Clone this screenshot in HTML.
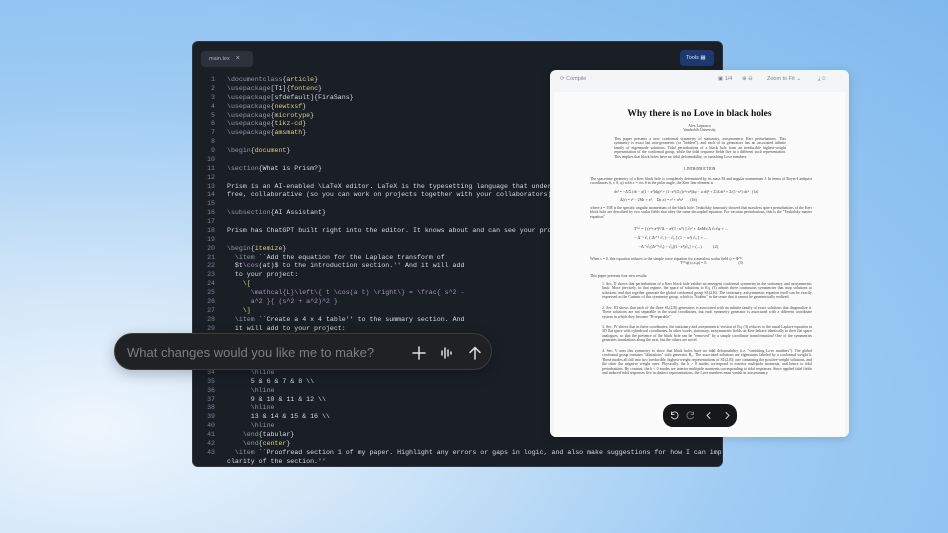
<!DOCTYPE html>
<html><head><meta charset="utf-8"><style>
*{margin:0;padding:0;box-sizing:border-box}
body{width:948px;height:533px;overflow:hidden;position:relative;font-family:"Liberation Sans",sans-serif;
background:radial-gradient(ellipse at 10% 80%,#eef6fd 0%,#cfe5f8 25%,#9dcbf3 55%,#7fb9ee 100%)}
.ed{position:absolute;left:192px;top:41px;width:531px;height:426px;background:#1a1f26;border:1px solid #2e3540;border-radius:6px;overflow:hidden}
.tab{position:absolute;left:8px;top:9px;width:52px;height:16px;background:#2b323c;border-radius:4px;color:#aab2bd;font-size:5.5px;line-height:16px;padding-left:8px}
.tab i{font-style:normal;margin-left:6px;font-size:7px}
.tools{position:absolute;right:8px;top:8px;width:34px;height:16px;background:#1d3a70;border-radius:4px;color:#cfe0ff;font-size:5.5px;line-height:16px;padding-left:6px}
.code{position:absolute;left:0;top:34px;font-family:"Liberation Mono",monospace;font-size:6.6px;line-height:8.88px;color:#d6dbe2}
.code div{height:8.88px;white-space:pre}
.n{display:inline-block;width:22px;text-align:right;color:#7c8594;margin-right:12px}
.c{color:#8f99a8}.a{color:#d9cf95}.m{color:#a58fc4}
.pdf{position:absolute;left:550px;top:70px;width:299px;height:367px;background:#f4f5f6;border-radius:6px;box-shadow:0 2px 10px rgba(0,0,0,.15);overflow:hidden}
.tb{height:19px;font-size:5.5px;color:#7d838b;line-height:19px;padding-left:10px;position:relative}
.page{position:absolute;left:4px;top:22px;right:4px;bottom:0;background:#fbfbfb;font-family:"Liberation Serif",serif;color:#333}
.t{position:absolute;left:0;right:0;text-align:center;font-weight:bold;font-size:9.5px;top:17px;color:#111}
.p{position:absolute;font-size:3.9px;line-height:4.4px;text-align:justify;color:#444}
.chat{position:absolute;left:114px;top:333px;width:378px;height:37px;background:#1f2123;border-radius:19px;border:1px solid #3a3c3f;box-shadow:0 4px 14px rgba(0,0,0,.25)}
.chat span{position:absolute;left:12px;top:11px;font-size:13px;color:#7b7e83}
.ctl{position:absolute;left:663px;top:404px;width:74px;height:23px;background:#16181a;border-radius:10px}
</style></head><body>
<div class="ed">
<div class="tab">main.tex<i>×</i></div>
<div class="tools">Tools ▦</div>
<div class="code"><div><span class="n">1</span><span class="c">\documentclass</span>{<span class="a">article</span>}</div><div><span class="n">2</span><span class="c">\usepackage</span>[T1]{<span class="a">fontenc</span>}</div><div><span class="n">3</span><span class="c">\usepackage</span>[sfdefault]{FiraSans}</div><div><span class="n">4</span><span class="c">\usepackage</span>{<span class="a">newtxsf</span>}</div><div><span class="n">5</span><span class="c">\usepackage</span>{<span class="a">microtype</span>}</div><div><span class="n">6</span><span class="c">\usepackage</span>{<span class="a">tikz-cd</span>}</div><div><span class="n">7</span><span class="c">\usepackage</span>{<span class="a">amsmath</span>}</div><div><span class="n">8</span></div><div><span class="n">9</span><span class="c">\begin</span>{<span class="a">document</span>}</div><div><span class="n">10</span></div><div><span class="n">11</span><span class="c">\section</span>{What is Prism?}</div><div><span class="n">12</span></div><div><span class="n">13</span>Prism is an AI-enabled \LaTeX editor. LaTeX is the typesetting language that underlies most scientific papers.</div><div><span class="n">14</span>free, collaborative (so you can work on projects together with your collaborators), and powered by AI.</div><div><span class="n">15</span></div><div><span class="n">16</span><span class="c">\subsection</span>{AI Assistant}</div><div><span class="n">17</span></div><div><span class="n">18</span>Prism has ChatGPT built right into the editor. It knows about and can see your project, so it can help.</div><div><span class="n">19</span></div><div><span class="n">20</span><span class="c">\begin</span>{<span class="a">itemize</span>}</div><div><span class="n">21</span>  <span class="c">\item</span> ``Add the equation for the Laplace transform of</div><div><span class="n">22</span>  $t<span class="m">\cos</span>(at)$ to the introduction section.'' And it will add</div><div><span class="n">23</span>  to your project:</div><div><span class="n">24</span>    <span class="a">\[</span></div><div><span class="n">25</span>      <span class="m">\mathcal{L}\left\{ t \cos(a t) \right\} = \frac{ s^2 -</span></div><div><span class="n">26</span>      <span class="m">a^2 }{ (s^2 + a^2)^2 }</span></div><div><span class="n">27</span>    <span class="a">\]</span></div><div><span class="n">28</span>  <span class="c">\item</span> ``Create a 4 x 4 table'' to the summary section. And</div><div><span class="n">29</span>  it will add to your project:</div><div><span class="n">30</span></div><div><span class="n">31</span></div><div><span class="n">32</span></div><div><span class="n">33</span></div><div><span class="n">34</span>      <span class="c">\hline</span></div><div><span class="n">35</span>      5 &amp; 6 &amp; 7 &amp; 8 \\</div><div><span class="n">36</span>      <span class="c">\hline</span></div><div><span class="n">37</span>      9 &amp; 10 &amp; 11 &amp; 12 \\</div><div><span class="n">38</span>      <span class="c">\hline</span></div><div><span class="n">39</span>      13 &amp; 14 &amp; 15 &amp; 16 \\</div><div><span class="n">40</span>      <span class="c">\hline</span></div><div><span class="n">41</span>    <span class="c">\end</span>{tabular}</div><div><span class="n">42</span>    <span class="c">\end</span>{<span class="a">center</span>}</div><div><span class="n">43</span>  <span class="c">\item</span> ``Proofread section 1 of my paper. Highlight any errors or gaps in logic, and also make suggestions for how I can improve the</div><div><span class="n"></span>clarity of the section.''</div></div>
</div>
<div class="pdf">
<div class="tb">⟳ Compile<span style="position:absolute;left:168px">▣ 1/4</span><span style="position:absolute;left:192px">⊕ ⊖</span><span style="position:absolute;left:217px">Zoom to Fit ⌄</span><span style="position:absolute;left:268px">⤓ ⊙</span></div>
<div class="page">
<div class="t">Why there is no Love in black holes</div>
<div style="position:absolute;top:32px;left:0;right:0;text-align:center;font-size:3.8px;color:#444">Alex Lupsasca<br>Vanderbilt University</div>
<div class="p" style="left:60px;width:172px;top:45px">This paper presents a new conformal symmetry of stationary, axisymmetric Kerr perturbations. This symmetry is exact but non-geometric (or "hidden"), and each of its generators has an associated infinite family of eigenmode solutions. Tidal perturbations of a black hole form an irreducible highest-weight representation of the conformal group, while the tidal response fields live in a different such representation. This implies that black holes have no tidal deformability, or vanishing Love numbers.</div>
<div style="position:absolute;top:75px;left:0;right:0;text-align:center;font-size:3.8px;color:#333">I. INTRODUCTION</div>
<div class="p" style="left:36px;width:222px;top:85px">The spacetime geometry of a Kerr black hole is completely determined by its mass M and angular momentum J. In terms of Boyer-Lindquist coordinates (t, r, θ, φ) with x = cos θ in the polar angle, the Kerr line element is</div>
<div class="p" style="left:60px;width:200px;top:96px;font-size:4px;line-height:8px">ds² = −Δ/Σ (dt − a(1 − x²)dφ)² + (1−x²)/Σ ((r²+a²)dφ − a dt)² + Σ/Δ dr² + Σ/(1−x²) dx² &nbsp; (1a)<br>&nbsp;&nbsp;&nbsp;&nbsp;&nbsp;&nbsp;Δ(r) = r² − 2Mr + a², &nbsp;&nbsp; Σ(r,x) = r² + a²x² &nbsp;&nbsp;&nbsp;&nbsp;&nbsp; (1b)</div>
<div class="p" style="left:36px;width:222px;top:114px">where a = J/M is the specific angular momentum of the black hole. Teukolsky famously showed that massless spin-s perturbations of the Kerr black hole are described by two scalar fields that obey the same decoupled equation. For vacuum perturbations, this is the "Teukolsky master equation"</div>
<div class="p" style="left:80px;width:160px;top:132px;font-size:4.5px;line-height:9px;color:#444">T⁽ˢ⁾ = [ (r²+a²)²/Δ − a²(1−x²) ] ∂ₜ² + 4aMr/Δ ∂ₜ∂φ + ...<br>− Δ⁻ˢ ∂ᵣ ( Δˢ⁺¹ ∂ᵣ ) − ∂ₓ [ (1 − x²) ∂ₓ ] + ...<br>&nbsp;&nbsp;&nbsp;&nbsp;−Δ⁻ˢ∂ᵣ(Δˢ⁺¹∂ᵣ) − ∂ₓ[(1−x²)∂ₓ] + (...) &nbsp;&nbsp;&nbsp;&nbsp;&nbsp;&nbsp;&nbsp;&nbsp; (2)</div>
<div class="p" style="left:36px;width:222px;top:165px">When s = 0, this equation reduces to the simple wave equation for a massless scalar field ψ = Φ⁽⁰⁾.<br><span style="margin-left:90px">T⁽⁰⁾ψ(t,r,x,φ) = 0. &nbsp;&nbsp;&nbsp;&nbsp;&nbsp;&nbsp;&nbsp;&nbsp;&nbsp;&nbsp;&nbsp;&nbsp;&nbsp;&nbsp;&nbsp;&nbsp;&nbsp;&nbsp;&nbsp;&nbsp;&nbsp;&nbsp;&nbsp;&nbsp;&nbsp;&nbsp;&nbsp;&nbsp;&nbsp;&nbsp;&nbsp;(3)</span></div>
<div class="p" style="left:36px;width:222px;top:182px">This paper presents four new results:</div>
<div class="p" style="left:48px;width:210px;top:190px">1. Sec. II shows that perturbations of a Kerr black hole exhibit an emergent conformal symmetry in the stationary and axisymmetric limit. More precisely, in that regime, the space of solutions to Eq. (3) admits three continuous symmetries that map solutions to solutions, and that together generate the global conformal group SL(2,R). The stationary, axisymmetric equation itself can be exactly expressed as the Casimir of this symmetry group, which is "hidden" in the sense that it cannot be geometrically realized.</div>
<div class="p" style="left:48px;width:210px;top:214px">2. Sec. III shows that each of the three SL(2,R) generators is associated with an infinite family of exact solutions that diagonalize it. These solutions are not separable in the usual coordinates, but each symmetry generator is associated with a different coordinate system in which they become "R-separable".</div>
<div class="p" style="left:48px;width:210px;top:233px">3. Sec. IV shows that in these coordinates, the stationary and axisymmetric version of Eq. (3) reduces to the usual Laplace equation in 3D flat space with cylindrical coordinates. In other words, stationary, axisymmetric fields on Kerr behave identically to their flat space analogues, so that the presence of the black hole can be "removed" by a simple coordinate transformation! One of the symmetries generates translations along the axis, but the others are novel.</div>
<div class="p" style="left:48px;width:210px;top:257px">4. Sec. V uses this symmetry to show that black holes have no tidal deformability (i.e. "vanishing Love numbers"). The global conformal group contains "dilatations" with generator H₀. The associated solutions are eigenstates labeled by a conformal weight h. These modes all fall into two irreducible, highest-weight representations of SL(2,R): one containing the positive-weight solutions, and the other the negative weight ones. Physically, the h &gt; 0 modes correspond to exterior multipole moments, and hence to tidal perturbations. By contrast, the h &lt; 0 modes are interior multipole moments corresponding to tidal responses. Since applied tidal fields and induced tidal responses live in distinct representations, the Love numbers must vanish in axisymmetry.</div>
</div>
</div>
<div class="ctl"><svg width="74" height="23" viewBox="0 0 74 23" fill="none" stroke="#d0d0d0" stroke-width="1" stroke-linecap="round"><path d="M9 9a3.5 3.5 0 1 1-.5 4M8.5 8v2.5h2.5"/><path d="M30 9a3.5 3.5 0 1 0 .5 4M30.5 8v2.5h-2.5" stroke="#777"/><path d="M47 8.5l-3 3 3 3"/><path d="M63 8.5l3 3-3 3"/></svg></div>
<div class="chat"><span>What changes would you like me to make?</span>
<svg style="position:absolute;left:296px;top:11px" width="80" height="16" viewBox="0 0 80 16" fill="none" stroke="#e0e0e0" stroke-width="1.5" stroke-linecap="round"><path d="M8 2v12M2 8h12"/><path d="M31 6v4M34 3v10M37 5v6M40 7v2"/><path d="M64 14V3M59 7.5l5-5 5 5"/></svg></div>
</body></html>
